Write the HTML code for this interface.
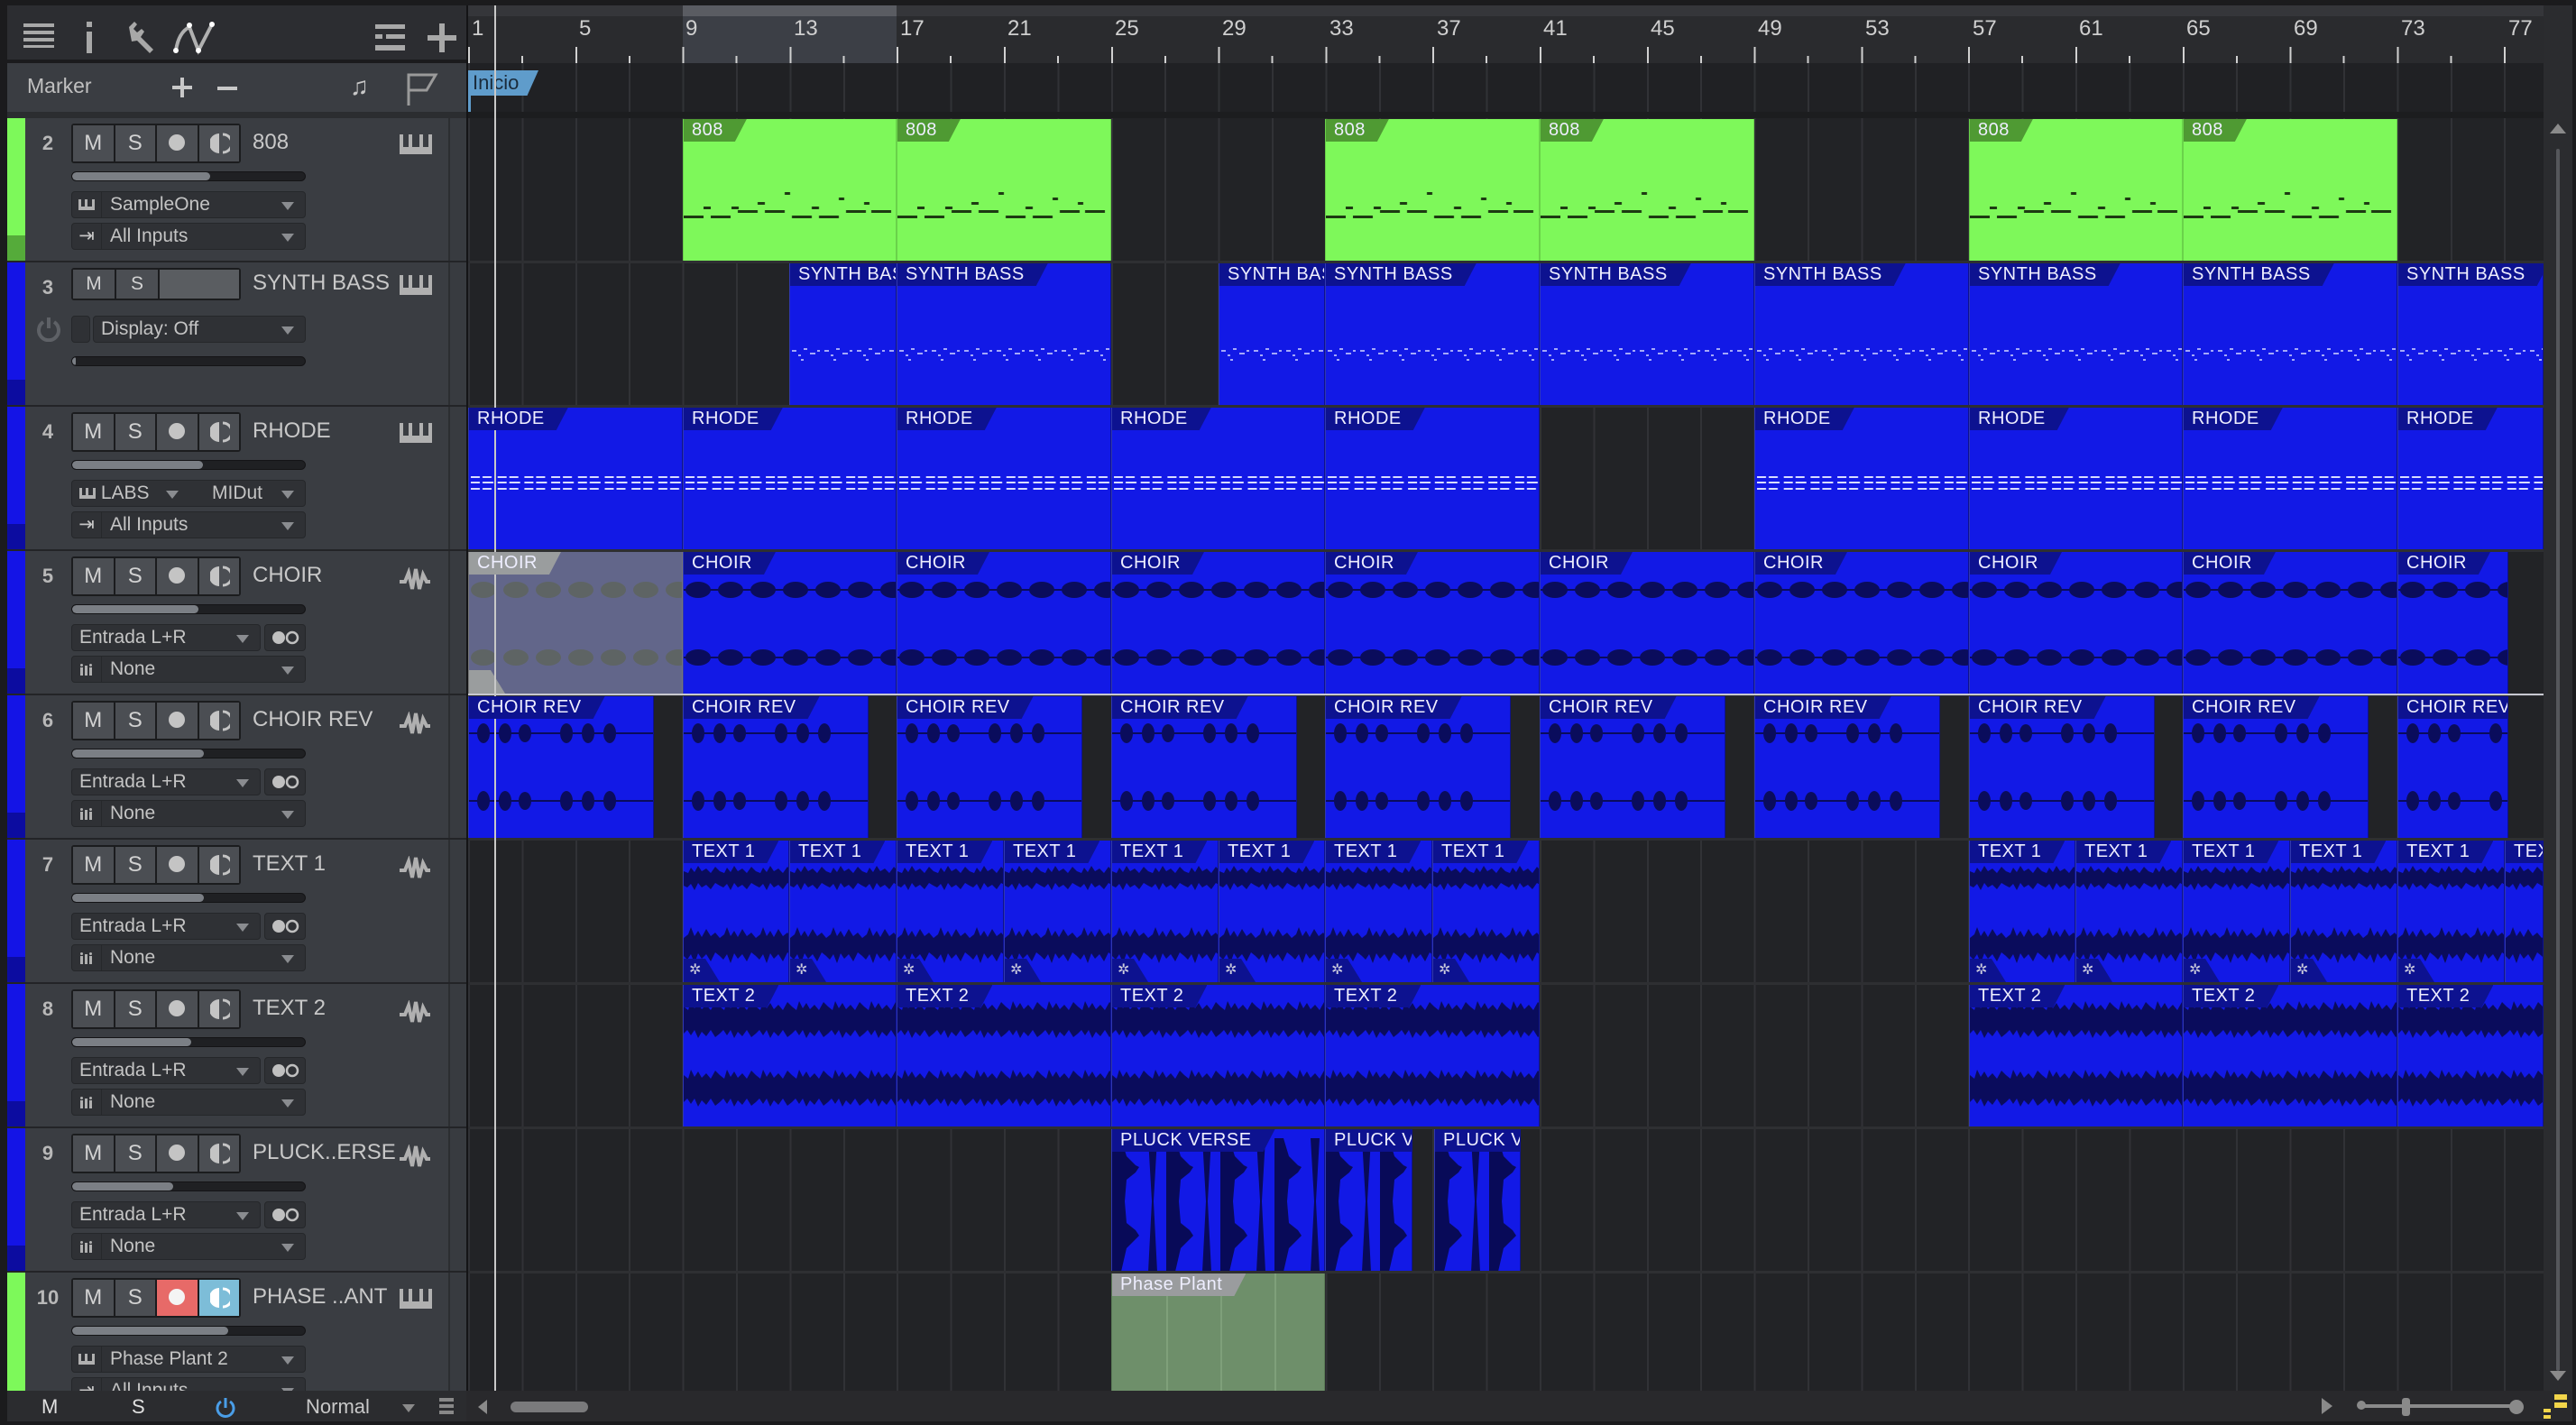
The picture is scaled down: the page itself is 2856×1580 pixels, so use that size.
<!DOCTYPE html>
<html><head><meta charset="utf-8">
<style>
*{box-sizing:border-box;margin:0;padding:0}
body{width:2856px;height:1580px;background:#1b1b1d;position:relative;overflow:hidden;font-family:"Liberation Sans",sans-serif}
.a{position:absolute}
.tl{position:absolute;left:519px;top:124px;width:2301px;height:1418px;background:#222326;
 background-image:repeating-linear-gradient(90deg,#313236 0 2px,transparent 2px 59.4px)}
.hs{position:absolute;left:519px;width:2301px;height:3px;background:#2e2f32}
.clip{position:absolute;background:#1219e6;overflow:hidden;border-left:1px solid #3038b0;border-right:1px solid #0d1190}
.clip svg{position:absolute;left:0;top:0}
.lab{position:absolute;left:0;top:0;height:25px;padding:0 26px 0 9px;background:#0d1290;color:#eef;font-size:20px;line-height:25px;letter-spacing:.5px;white-space:nowrap;clip-path:polygon(0 0,100% 0,calc(100% - 13px) 100%,0 100%);z-index:2}
.g .lab{background:#4f9a33}
.hd{position:absolute;left:28px;width:469px;height:158px;background:#3a3d42}
.num{position:absolute;left:12px;top:15px;width:26px;text-align:center;color:#b8b8b8;font-weight:bold;font-size:22px}
.bt{position:absolute;left:51px;top:6px;width:188px;height:44px;background:#1b1c1e;border-radius:3px;padding:2px;display:flex;gap:2px}
.bt div{flex:1;background:#4b4e53;color:#d2d2d2;font-size:24px;text-align:center;line-height:40px;position:relative}
.bt svg{position:absolute;left:12px;top:7px}
.dot{display:inline-block;width:18px;height:18px;border-radius:50%;background:#c4c4c4;vertical-align:middle;margin-top:-4px}
.nm{position:absolute;left:252px;top:13px;color:#c8c8c8;font-size:24px;white-space:nowrap}
.sl{position:absolute;left:51px;top:59px;width:260px;height:11px;background:#1f2023;border:1px solid #141416;border-radius:6px;overflow:hidden}
.sl i{display:block;height:100%;background:#7b7f85;border-radius:5px}
.dd{position:absolute;height:30px;background:#2f3135;border:1px solid #25272a;border-radius:4px;color:#c4c4c4;font-size:21px;line-height:28px;white-space:nowrap}
.dd .ic{position:absolute;left:0;top:0;width:33px;height:100%;border-right:1px solid #26282b;display:flex;align-items:center;justify-content:center}
.dd .tx{position:absolute;left:42px;top:0}
.dd .ar{position:absolute;right:12px;top:11px;width:0;height:0;border-left:7px solid transparent;border-right:7px solid transparent;border-top:9px solid #8a8c90}
.strip{position:absolute;left:8px;width:20px;height:158px}
.strip i{position:absolute;left:0;bottom:0;width:20px;height:28px}
.ico{position:absolute;left:415px;top:18px}
.rn{position:absolute;top:18px;color:#cfcfcf;font-size:24px}
</style></head><body>
<svg class="a" width="0" height="0" style="left:0;top:0">
<defs>
<symbol id="mon" viewBox="0 0 22 26"><path d="M10 2 A11 11 0 0 0 10 24Z" fill="currentColor"/><path d="M14 3 A10 10 0 0 1 14 23" fill="none" stroke="currentColor" stroke-width="3"/></symbol>
<pattern id="p808" patternUnits="userSpaceOnUse" width="237.6" height="158">
<g fill="#1d3a12"><rect x="0" y="107" width="22" height="3"/><rect x="30" y="107" width="22" height="3"/><rect x="60" y="101" width="22" height="3"/><rect x="90" y="101" width="22" height="3"/><rect x="120" y="107" width="22" height="3"/><rect x="150" y="107" width="22" height="3"/><rect x="180" y="101" width="22" height="3"/><rect x="208" y="101" width="22" height="3"/><rect x="22" y="97" width="8" height="3"/><rect x="53" y="97" width="8" height="3"/><rect x="82" y="92" width="8" height="3"/><rect x="112" y="81" width="6" height="3"/><rect x="142" y="97" width="8" height="3"/><rect x="172" y="87" width="6" height="3"/><rect x="200" y="92" width="6" height="3"/></g>
</pattern>
<pattern id="psyn" patternUnits="userSpaceOnUse" width="36" height="158">
<g fill="#c8ccff" opacity=".8"><rect x="2" y="96" width="5" height="2"/><rect x="9" y="101" width="3" height="2"/><rect x="15" y="94" width="4" height="2"/><rect x="22" y="99" width="6" height="2"/><rect x="30" y="96" width="3" height="2"/><rect x="12" y="106" width="3" height="2"/></g>
</pattern>
<pattern id="prh" patternUnits="userSpaceOnUse" width="29.7" height="158">
<g fill="#d8dcff"><rect x="2" y="76" width="10" height="2"/><rect x="15" y="76" width="10" height="2"/><rect x="2" y="82" width="10" height="2"/><rect x="15" y="82" width="12" height="2"/><rect x="2" y="89" width="10" height="2"/><rect x="15" y="89" width="10" height="2"/></g>
</pattern>
<pattern id="pch" patternUnits="userSpaceOnUse" width="36" height="158">
<g fill="#0a0c5c"><ellipse cx="16" cy="42" rx="14" ry="9"/><ellipse cx="16" cy="117" rx="14" ry="9"/><rect x="0" y="41" width="36" height="2"/><rect x="0" y="116" width="36" height="2"/></g>
</pattern>
<pattern id="pchg" patternUnits="userSpaceOnUse" width="36" height="158">
<g fill="#5e6464"><ellipse cx="16" cy="42" rx="14" ry="9"/><ellipse cx="16" cy="117" rx="14" ry="9"/></g>
</pattern>
<pattern id="prev" patternUnits="userSpaceOnUse" width="206" height="158">
<g fill="#0a0c5c"><rect x="0" y="40" width="206" height="2"/><rect x="0" y="115" width="206" height="2"/>
<ellipse cx="16" cy="41" rx="7" ry="11"/><ellipse cx="40" cy="41" rx="7" ry="11"/><ellipse cx="62" cy="41" rx="7" ry="10"/><ellipse cx="108" cy="41" rx="7" ry="11"/><ellipse cx="132" cy="41" rx="7" ry="11"/><ellipse cx="156" cy="41" rx="7" ry="11"/>
<ellipse cx="16" cy="116" rx="7" ry="11"/><ellipse cx="40" cy="116" rx="7" ry="11"/><ellipse cx="62" cy="116" rx="7" ry="10"/><ellipse cx="108" cy="116" rx="7" ry="11"/><ellipse cx="132" cy="116" rx="7" ry="11"/><ellipse cx="156" cy="116" rx="7" ry="11"/></g>
</pattern>
<pattern id="ptx" patternUnits="userSpaceOnUse" width="40" height="158">
<g fill="#0a0c5c"><polygon points="0,34 5,36 8,30 12,35 16,28 20,34 25,31 30,36 35,29 40,34 40,50 35,47 30,54 25,49 20,52 16,47 12,55 8,48 4,52 0,50"/>
<polygon points="0,108 5,104 8,96 12,106 16,100 20,107 25,98 30,106 35,102 40,108 40,128 35,124 30,134 25,126 20,131 16,125 12,136 8,126 4,132 0,128"/></g>
</pattern>
<pattern id="ptx2" patternUnits="userSpaceOnUse" width="40" height="158">
<g fill="#0a0c5c"><polygon points="0,24 5,28 8,18 12,26 16,20 20,27 25,22 30,28 35,19 40,24 40,54 35,58 30,50 25,57 20,52 16,59 12,50 8,56 4,50 0,54"/>
<polygon points="0,100 5,104 8,94 12,102 16,96 20,103 25,98 30,104 35,95 40,100 40,130 35,134 30,126 25,133 20,128 16,135 12,126 8,132 4,126 0,130"/></g>
</pattern>
<pattern id="ppl" patternUnits="userSpaceOnUse" width="60" height="158">
<g fill="#080a58"><polygon points="0,10 10,10 16,30 26,40 30,42 26,48 16,56 14,80 16,104 26,112 30,118 26,122 16,132 10,158 0,158"/><polygon points="40,10 50,10 46,80 50,158 40,158 44,80"/></g>
</pattern>
</defs></svg>

<!-- top toolbar -->
<div class="a" style="left:8px;top:6px;width:509px;height:60px;background:#2c2d31"></div>
<svg class="a" style="left:26px;top:26px" width="34" height="28"><g fill="#a8a8a8"><rect y="0" width="34" height="4"/><rect y="8" width="34" height="4"/><rect y="16" width="34" height="4"/><rect y="24" width="34" height="3"/></g></svg>
<svg class="a" style="left:94px;top:24px" width="10" height="36"><g fill="#a8a8a8"><rect x="2" y="0" width="6" height="6"/><rect x="2" y="11" width="6" height="24"/></g></svg>
<svg class="a" style="left:140px;top:24px" width="32" height="36"><path d="M3 6 L9 0 L12 3 L8 8 L12 12 L17 8 L20 11 L16 17 L30 31 L26 35 L12 21 L6 22 Z" fill="#a8a8a8"/></svg>
<svg class="a" style="left:190px;top:22px" width="50" height="40"><path d="M5 34 Q8 14 20 8 L30 34 L45 5" fill="none" stroke="#b0b0b0" stroke-width="4"/><g fill="#fff"><circle cx="5" cy="34" r="3"/><circle cx="20" cy="6" r="3"/><circle cx="30" cy="34" r="3"/><circle cx="45" cy="5" r="3"/></g></svg>
<svg class="a" style="left:416px;top:27px" width="33" height="31"><g fill="#a8a8a8"><rect width="33" height="5"/><rect x="12" y="11" width="21" height="5"/><rect y="11" width="8" height="5"/><rect y="23" width="33" height="6"/></g></svg>
<svg class="a" style="left:474px;top:26px" width="32" height="32"><g fill="#a8a8a8"><rect x="13" width="6" height="32"/><rect y="13" width="32" height="6"/></g></svg>

<!-- marker row -->
<div class="a" style="left:8px;top:70px;width:509px;height:54px;background:#3a3d42"></div>
<div class="a" style="left:30px;top:82px;color:#c0c0c0;font-size:23px">Marker</div>
<svg class="a" style="left:191px;top:86px" width="22" height="22"><g fill="#c8c8c8"><rect x="9" width="4" height="22"/><rect y="9" width="22" height="4"/></g></svg>
<svg class="a" style="left:241px;top:96px" width="22" height="4"><rect width="22" height="4" fill="#c8c8c8"/></svg>
<div class="a" style="left:388px;top:80px;color:#c8c8c8;font-size:28px">♫</div>
<svg class="a" style="left:450px;top:80px" width="36" height="38"><path d="M3 37 V3 H33 L23 20 H3" fill="none" stroke="#9a9a9a" stroke-width="3"/></svg>

<!-- ruler -->
<div class="a" style="left:519px;top:6px;width:2301px;height:64px;background:#2a2b2e"></div>
<div class="a" style="left:519px;top:6px;width:2301px;height:12px;background:#35363a"></div>
<div class="a" style="left:757px;top:6px;width:237px;height:64px;background:#3c3f46"></div>
<div class="a" style="left:757px;top:6px;width:237px;height:12px;background:#5a5c62"></div>
<div class="a" style="left:519px;top:52px;width:2301px;height:18px;background-image:repeating-linear-gradient(90deg,#d0d0d0 0 2px,transparent 2px 118.8px)"></div>
<div class="a" style="left:578px;top:62px;width:2240px;height:8px;background-image:repeating-linear-gradient(90deg,#d0d0d0 0 2px,transparent 2px 118.8px)"></div>
<div class="rn" style="left:523px">1</div><div class="rn" style="left:642px">5</div><div class="rn" style="left:760px">9</div><div class="rn" style="left:880px">13</div><div class="rn" style="left:998px">17</div><div class="rn" style="left:1117px">21</div><div class="rn" style="left:1236px">25</div><div class="rn" style="left:1355px">29</div><div class="rn" style="left:1474px">33</div><div class="rn" style="left:1593px">37</div><div class="rn" style="left:1711px">41</div><div class="rn" style="left:1830px">45</div><div class="rn" style="left:1949px">49</div><div class="rn" style="left:2068px">53</div><div class="rn" style="left:2187px">57</div><div class="rn" style="left:2305px">61</div><div class="rn" style="left:2424px">65</div><div class="rn" style="left:2543px">69</div><div class="rn" style="left:2662px">73</div><div class="rn" style="left:2781px">77</div>

<!-- marker lane & timeline -->
<div class="a" style="left:519px;top:70px;width:2301px;height:54px;background:#202124;background-image:repeating-linear-gradient(90deg,#313236 0 2px,transparent 2px 59.4px)"></div>
<div class="a" style="left:519px;top:78px;width:78px;height:28px;background:#5f9ccb;clip-path:polygon(0 0,100% 0,84% 100%,0 100%);color:#1a2a3a;font-size:22px;line-height:28px;padding-left:5px">Inicio</div>
<div class="a" style="left:519px;top:106px;width:3px;height:18px;background:#5f9ccb"></div>
<div class="a" style="left:519px;top:124px;width:2301px;height:7px;background:#1c1d1f"></div>
<div class="tl" style="top:131px;height:1411px"></div>
<div class="hs" style="top:289px"></div><div class="hs" style="top:449px"></div><div class="hs" style="top:609px"></div><div class="hs" style="top:769px"></div><div class="hs" style="top:929px"></div><div class="hs" style="top:1089px"></div><div class="hs" style="top:1249px"></div><div class="hs" style="top:1409px"></div>

<!-- header column background -->
<div class="a" style="left:8px;top:124px;width:509px;height:1418px;background:#2b2d30"></div>
<div class="a" style="left:497px;top:131px;width:20px;height:1411px;background:#383b40;border-left:2px solid #2c2e31"></div>

<!-- TRACK 2 -->
<div class="strip" style="top:131px;background:#7df95a"><i style="background:#55ab3a"></i></div>
<div class="hd" style="top:131px">
<div class="num">2</div>
<div class="bt"><div>M</div><div>S</div><div><span class="dot"></span></div><div style="color:#c4c4c4"><svg width="22" height="26"><use href="#mon"/></svg></div></div>
<div class="nm">808</div>
<svg class="ico" width="36" height="22"><path d="M0 0 H4 V14 H10 V0 H14 V14 H22 V0 H26 V14 H32 V0 H36 V22 H0Z" fill="#b0b0b0"/></svg>
<div class="sl"><i style="width:153px"></i></div>
<div class="dd" style="left:51px;top:81px;width:260px"><div class="ic"><svg width="18" height="12"><path d="M0 0H3V8H7V0H10V8H15V0H18V12H0Z" fill="#b0b0b0"/></svg></div><div class="tx">SampleOne</div><div class="ar"></div></div>
<div class="dd" style="left:51px;top:116px;width:260px"><div class="ic">⇥</div><div class="tx">All Inputs</div><div class="ar"></div></div>
</div>

<!-- TRACK 3 -->
<div class="strip" style="top:291px;background:#1414e6"><i style="background:#0c0ca0"></i></div>
<div class="hd" style="top:291px">
<div class="num">3</div>
<div class="bt" style="height:36px"><div style="flex:0 0 46px;line-height:32px;font-size:21px">M</div><div style="flex:0 0 46px;line-height:32px;font-size:21px">S</div><div style="background:#5a5d61"></div></div>
<div class="nm" style="top:9px">SYNTH BASS</div>
<svg class="ico" style="top:14px" width="36" height="22"><path d="M0 0 H4 V14 H10 V0 H14 V14 H22 V0 H26 V14 H32 V0 H36 V22 H0Z" fill="#b0b0b0"/></svg>
<svg class="a" style="left:12px;top:60px" width="28" height="28"><path d="M8 6 A11 11 0 1 0 20 6" fill="none" stroke="#5e6166" stroke-width="4"/><rect x="12" y="1" width="4" height="12" fill="#5e6166"/></svg>
<div class="dd" style="left:51px;top:59px;width:21px"></div>
<div class="dd" style="left:75px;top:59px;width:236px"><div class="tx" style="left:8px">Display: Off</div><div class="ar"></div></div>
<div class="sl" style="top:104px"><i style="width:4px"></i></div>
</div>

<!-- TRACK 4 -->
<div class="strip" style="top:451px;background:#1414e6"><i style="background:#0c0ca0"></i></div>
<div class="hd" style="top:451px">
<div class="num">4</div>
<div class="bt"><div>M</div><div>S</div><div><span class="dot"></span></div><div style="color:#c4c4c4"><svg width="22" height="26"><use href="#mon"/></svg></div></div>
<div class="nm">RHODE</div>
<svg class="ico" width="36" height="22"><path d="M0 0 H4 V14 H10 V0 H14 V14 H22 V0 H26 V14 H32 V0 H36 V22 H0Z" fill="#b0b0b0"/></svg>
<div class="sl"><i style="width:145px"></i></div>
<div class="dd" style="left:51px;top:81px;width:260px"><div class="tx" style="left:8px"><svg width="18" height="12"><path d="M0 0H3V8H7V0H10V8H15V0H18V12H0Z" fill="#b0b0b0"/></svg> LABS</div><div class="ar" style="right:140px"></div><div class="tx" style="left:155px">MIDut</div><div class="ar"></div></div>
<div class="dd" style="left:51px;top:116px;width:260px"><div class="ic">⇥</div><div class="tx">All Inputs</div><div class="ar"></div></div>
</div>

<!-- audio tracks 5-9 -->
<div class="strip" style="top:611px;background:#1414e6"><i style="background:#0c0ca0"></i></div>
<div class="hd" style="top:611px">
<div class="num">5</div>
<div class="bt"><div>M</div><div>S</div><div><span class="dot"></span></div><div style="color:#c4c4c4"><svg width="22" height="26"><use href="#mon"/></svg></div></div>
<div class="nm">CHOIR</div>
<svg class="ico" width="34" height="26"><path d="M0 16 L6 16 L10 6 L14 24 L18 2 L22 24 L26 8 L30 16 L34 16" fill="none" stroke="#b0b0b0" stroke-width="4"/></svg>
<div class="sl"><i style="width:140px"></i></div>
<div class="dd" style="left:51px;top:81px;width:210px"><div class="tx" style="left:8px">Entrada L+R</div><div class="ar"></div></div>
<div class="dd" style="left:265px;top:81px;width:46px"><svg style="position:absolute;left:7px;top:6px" width="32" height="16"><circle cx="8" cy="8" r="7" fill="#c0c0c0"/><circle cx="23" cy="8" r="6" fill="none" stroke="#c0c0c0" stroke-width="2.5"/></svg></div>
<div class="dd" style="left:51px;top:116px;width:260px"><div class="ic"><svg width="16" height="14"><g fill="#b0b0b0"><rect x="1" y="5" width="3" height="9"/><rect x="6" y="3" width="3" height="11"/><rect x="11" y="5" width="3" height="9"/><circle cx="2.5" cy="2.5" r="1.5"/><circle cx="12.5" cy="2.5" r="1.5"/></g></svg></div><div class="tx">None</div><div class="ar"></div></div>
</div>

<div class="strip" style="top:771px;background:#1414e6"><i style="background:#0c0ca0"></i></div>
<div class="hd" style="top:771px">
<div class="num">6</div>
<div class="bt"><div>M</div><div>S</div><div><span class="dot"></span></div><div style="color:#c4c4c4"><svg width="22" height="26"><use href="#mon"/></svg></div></div>
<div class="nm">CHOIR REV</div>
<svg class="ico" width="34" height="26"><path d="M0 16 L6 16 L10 6 L14 24 L18 2 L22 24 L26 8 L30 16 L34 16" fill="none" stroke="#b0b0b0" stroke-width="4"/></svg>
<div class="sl"><i style="width:146px"></i></div>
<div class="dd" style="left:51px;top:81px;width:210px"><div class="tx" style="left:8px">Entrada L+R</div><div class="ar"></div></div>
<div class="dd" style="left:265px;top:81px;width:46px"><svg style="position:absolute;left:7px;top:6px" width="32" height="16"><circle cx="8" cy="8" r="7" fill="#c0c0c0"/><circle cx="23" cy="8" r="6" fill="none" stroke="#c0c0c0" stroke-width="2.5"/></svg></div>
<div class="dd" style="left:51px;top:116px;width:260px"><div class="ic"><svg width="16" height="14"><g fill="#b0b0b0"><rect x="1" y="5" width="3" height="9"/><rect x="6" y="3" width="3" height="11"/><rect x="11" y="5" width="3" height="9"/><circle cx="2.5" cy="2.5" r="1.5"/><circle cx="12.5" cy="2.5" r="1.5"/></g></svg></div><div class="tx">None</div><div class="ar"></div></div>
</div>

<div class="strip" style="top:931px;background:#1414e6"><i style="background:#0c0ca0"></i></div>
<div class="hd" style="top:931px">
<div class="num">7</div>
<div class="bt"><div>M</div><div>S</div><div><span class="dot"></span></div><div style="color:#c4c4c4"><svg width="22" height="26"><use href="#mon"/></svg></div></div>
<div class="nm">TEXT 1</div>
<svg class="ico" width="34" height="26"><path d="M0 16 L6 16 L10 6 L14 24 L18 2 L22 24 L26 8 L30 16 L34 16" fill="none" stroke="#b0b0b0" stroke-width="4"/></svg>
<div class="sl"><i style="width:146px"></i></div>
<div class="dd" style="left:51px;top:81px;width:210px"><div class="tx" style="left:8px">Entrada L+R</div><div class="ar"></div></div>
<div class="dd" style="left:265px;top:81px;width:46px"><svg style="position:absolute;left:7px;top:6px" width="32" height="16"><circle cx="8" cy="8" r="7" fill="#c0c0c0"/><circle cx="23" cy="8" r="6" fill="none" stroke="#c0c0c0" stroke-width="2.5"/></svg></div>
<div class="dd" style="left:51px;top:116px;width:260px"><div class="ic"><svg width="16" height="14"><g fill="#b0b0b0"><rect x="1" y="5" width="3" height="9"/><rect x="6" y="3" width="3" height="11"/><rect x="11" y="5" width="3" height="9"/><circle cx="2.5" cy="2.5" r="1.5"/><circle cx="12.5" cy="2.5" r="1.5"/></g></svg></div><div class="tx">None</div><div class="ar"></div></div>
</div>

<div class="strip" style="top:1091px;background:#1414e6"><i style="background:#0c0ca0"></i></div>
<div class="hd" style="top:1091px">
<div class="num">8</div>
<div class="bt"><div>M</div><div>S</div><div><span class="dot"></span></div><div style="color:#c4c4c4"><svg width="22" height="26"><use href="#mon"/></svg></div></div>
<div class="nm">TEXT 2</div>
<svg class="ico" width="34" height="26"><path d="M0 16 L6 16 L10 6 L14 24 L18 2 L22 24 L26 8 L30 16 L34 16" fill="none" stroke="#b0b0b0" stroke-width="4"/></svg>
<div class="sl"><i style="width:132px"></i></div>
<div class="dd" style="left:51px;top:81px;width:210px"><div class="tx" style="left:8px">Entrada L+R</div><div class="ar"></div></div>
<div class="dd" style="left:265px;top:81px;width:46px"><svg style="position:absolute;left:7px;top:6px" width="32" height="16"><circle cx="8" cy="8" r="7" fill="#c0c0c0"/><circle cx="23" cy="8" r="6" fill="none" stroke="#c0c0c0" stroke-width="2.5"/></svg></div>
<div class="dd" style="left:51px;top:116px;width:260px"><div class="ic"><svg width="16" height="14"><g fill="#b0b0b0"><rect x="1" y="5" width="3" height="9"/><rect x="6" y="3" width="3" height="11"/><rect x="11" y="5" width="3" height="9"/><circle cx="2.5" cy="2.5" r="1.5"/><circle cx="12.5" cy="2.5" r="1.5"/></g></svg></div><div class="tx">None</div><div class="ar"></div></div>
</div>

<div class="strip" style="top:1251px;background:#1414e6"><i style="background:#0c0ca0"></i></div>
<div class="hd" style="top:1251px">
<div class="num">9</div>
<div class="bt"><div>M</div><div>S</div><div><span class="dot"></span></div><div style="color:#c4c4c4"><svg width="22" height="26"><use href="#mon"/></svg></div></div>
<div class="nm">PLUCK..ERSE</div>
<svg class="ico" width="34" height="26"><path d="M0 16 L6 16 L10 6 L14 24 L18 2 L22 24 L26 8 L30 16 L34 16" fill="none" stroke="#b0b0b0" stroke-width="4"/></svg>
<div class="sl"><i style="width:112px"></i></div>
<div class="dd" style="left:51px;top:81px;width:210px"><div class="tx" style="left:8px">Entrada L+R</div><div class="ar"></div></div>
<div class="dd" style="left:265px;top:81px;width:46px"><svg style="position:absolute;left:7px;top:6px" width="32" height="16"><circle cx="8" cy="8" r="7" fill="#c0c0c0"/><circle cx="23" cy="8" r="6" fill="none" stroke="#c0c0c0" stroke-width="2.5"/></svg></div>
<div class="dd" style="left:51px;top:116px;width:260px"><div class="ic"><svg width="16" height="14"><g fill="#b0b0b0"><rect x="1" y="5" width="3" height="9"/><rect x="6" y="3" width="3" height="11"/><rect x="11" y="5" width="3" height="9"/><circle cx="2.5" cy="2.5" r="1.5"/><circle cx="12.5" cy="2.5" r="1.5"/></g></svg></div><div class="tx">None</div><div class="ar"></div></div>
</div>

<!-- TRACK 10 -->
<div class="strip" style="top:1411px;height:131px;background:#7df95a"></div>
<div class="hd" style="top:1411px;height:131px;overflow:hidden">
<div class="num">10</div>
<div class="bt"><div>M</div><div>S</div><div style="background:#e76a68"><span class="dot" style="background:#f4f4f4"></span></div><div style="background:#7dbdd8;color:#fff"><svg width="22" height="26"><use href="#mon"/></svg></div></div>
<div class="nm">PHASE ..ANT</div>
<svg class="ico" width="36" height="22"><path d="M0 0 H4 V14 H10 V0 H14 V14 H22 V0 H26 V14 H32 V0 H36 V22 H0Z" fill="#b0b0b0"/></svg>
<div class="sl"><i style="width:173px"></i></div>
<div class="dd" style="left:51px;top:81px;width:260px"><div class="ic"><svg width="18" height="12"><path d="M0 0H3V8H7V0H10V8H15V0H18V12H0Z" fill="#b0b0b0"/></svg></div><div class="tx">Phase Plant 2</div><div class="ar"></div></div>
<div class="dd" style="left:51px;top:116px;width:260px"><div class="ic">⇥</div><div class="tx">All Inputs</div><div class="ar"></div></div>
</div>
<div class="a" style="left:8px;top:289px;width:509px;height:2px;background:#232427"></div>
<div class="a" style="left:8px;top:449px;width:509px;height:2px;background:#232427"></div>
<div class="a" style="left:8px;top:609px;width:509px;height:2px;background:#232427"></div>
<div class="a" style="left:8px;top:769px;width:509px;height:2px;background:#232427"></div>
<div class="a" style="left:8px;top:929px;width:509px;height:2px;background:#232427"></div>
<div class="a" style="left:8px;top:1089px;width:509px;height:2px;background:#232427"></div>
<div class="a" style="left:8px;top:1249px;width:509px;height:2px;background:#232427"></div>
<div class="a" style="left:8px;top:1409px;width:509px;height:2px;background:#232427"></div>
<div class="a" style="left:517px;top:6px;width:2px;height:1536px;background:#141416"></div>

<!-- CLIPS track 2 (808) -->
<div class="clip g" style="left:757px;top:132px;width:237px;height:157px;background:#7ef85a;border-color:#6ad24a"><div class="lab">808</div><svg width="237" height="157"><rect width="237" height="157" fill="url(#p808)"/></svg></div>
<div class="clip g" style="left:994px;top:132px;width:238px;height:157px;background:#7ef85a;border-color:#6ad24a"><div class="lab">808</div><svg width="238" height="157"><rect width="238" height="157" fill="url(#p808)"/></svg></div>
<div class="clip g" style="left:1469px;top:132px;width:238px;height:157px;background:#7ef85a;border-color:#6ad24a"><div class="lab">808</div><svg width="238" height="157"><rect width="238" height="157" fill="url(#p808)"/></svg></div>
<div class="clip g" style="left:1707px;top:132px;width:238px;height:157px;background:#7ef85a;border-color:#6ad24a"><div class="lab">808</div><svg width="238" height="157"><rect width="238" height="157" fill="url(#p808)"/></svg></div>
<div class="clip g" style="left:2183px;top:132px;width:237px;height:157px;background:#7ef85a;border-color:#6ad24a"><div class="lab">808</div><svg width="237" height="157"><rect width="237" height="157" fill="url(#p808)"/></svg></div>
<div class="clip g" style="left:2420px;top:132px;width:238px;height:157px;background:#7ef85a;border-color:#6ad24a"><div class="lab">808</div><svg width="238" height="157"><rect width="238" height="157" fill="url(#p808)"/></svg></div>

<!-- track 3 SYNTH BASS -->
<div class="clip" style="left:875px;top:292px;width:119px;height:157px"><div class="lab">SYNTH BASS</div><svg width="119" height="157"><rect width="119" height="157" fill="url(#psyn)"/></svg></div>
<div class="clip" style="left:994px;top:292px;width:238px;height:157px"><div class="lab">SYNTH BASS</div><svg width="238" height="157"><rect width="238" height="157" fill="url(#psyn)"/></svg></div>
<div class="clip" style="left:1351px;top:292px;width:118px;height:157px"><div class="lab">SYNTH BASS</div><svg width="118" height="157"><rect width="118" height="157" fill="url(#psyn)"/></svg></div>
<div class="clip" style="left:1469px;top:292px;width:238px;height:157px"><div class="lab">SYNTH BASS</div><svg width="238" height="157"><rect width="238" height="157" fill="url(#psyn)"/></svg></div>
<div class="clip" style="left:1707px;top:292px;width:238px;height:157px"><div class="lab">SYNTH BASS</div><svg width="238" height="157"><rect width="238" height="157" fill="url(#psyn)"/></svg></div>
<div class="clip" style="left:1945px;top:292px;width:238px;height:157px"><div class="lab">SYNTH BASS</div><svg width="238" height="157"><rect width="238" height="157" fill="url(#psyn)"/></svg></div>
<div class="clip" style="left:2183px;top:292px;width:237px;height:157px"><div class="lab">SYNTH BASS</div><svg width="237" height="157"><rect width="237" height="157" fill="url(#psyn)"/></svg></div>
<div class="clip" style="left:2420px;top:292px;width:238px;height:157px"><div class="lab">SYNTH BASS</div><svg width="238" height="157"><rect width="238" height="157" fill="url(#psyn)"/></svg></div>
<div class="clip" style="left:2658px;top:292px;width:162px;height:157px"><div class="lab">SYNTH BASS</div><svg width="162" height="157"><rect width="162" height="157" fill="url(#psyn)"/></svg></div>

<!-- track 4 RHODE -->
<div class="clip" style="left:519px;top:452px;width:238px;height:157px"><div class="lab">RHODE</div><svg width="238" height="157"><rect width="238" height="157" fill="url(#prh)"/></svg></div>
<div class="clip" style="left:757px;top:452px;width:237px;height:157px"><div class="lab">RHODE</div><svg width="237" height="157"><rect width="237" height="157" fill="url(#prh)"/></svg></div>
<div class="clip" style="left:994px;top:452px;width:238px;height:157px"><div class="lab">RHODE</div><svg width="238" height="157"><rect width="238" height="157" fill="url(#prh)"/></svg></div>
<div class="clip" style="left:1232px;top:452px;width:237px;height:157px"><div class="lab">RHODE</div><svg width="237" height="157"><rect width="237" height="157" fill="url(#prh)"/></svg></div>
<div class="clip" style="left:1469px;top:452px;width:238px;height:157px"><div class="lab">RHODE</div><svg width="238" height="157"><rect width="238" height="157" fill="url(#prh)"/></svg></div>
<div class="clip" style="left:1945px;top:452px;width:238px;height:157px"><div class="lab">RHODE</div><svg width="238" height="157"><rect width="238" height="157" fill="url(#prh)"/></svg></div>
<div class="clip" style="left:2183px;top:452px;width:237px;height:157px"><div class="lab">RHODE</div><svg width="237" height="157"><rect width="237" height="157" fill="url(#prh)"/></svg></div>
<div class="clip" style="left:2420px;top:452px;width:238px;height:157px"><div class="lab">RHODE</div><svg width="238" height="157"><rect width="238" height="157" fill="url(#prh)"/></svg></div>
<div class="clip" style="left:2658px;top:452px;width:162px;height:157px"><div class="lab">RHODE</div><svg width="162" height="157"><rect width="162" height="157" fill="url(#prh)"/></svg></div>

<!-- track 5 CHOIR -->
<div class="clip" style="left:519px;top:612px;width:238px;height:157px;background:#62668a;border-color:#777"><div class="lab" style="background:#9a9d9e">CHOIR</div><svg width="238" height="157"><rect width="238" height="157" fill="url(#pchg)"/></svg><div class="a" style="left:0;bottom:0;width:40px;height:26px;background:#9a9d9e;clip-path:polygon(0 0,60% 0,100% 100%,0 100%)"></div></div>
<div class="clip" style="left:757px;top:612px;width:237px;height:157px"><div class="lab">CHOIR</div><svg width="237" height="157"><rect width="237" height="157" fill="url(#pch)"/></svg></div>
<div class="clip" style="left:994px;top:612px;width:238px;height:157px"><div class="lab">CHOIR</div><svg width="238" height="157"><rect width="238" height="157" fill="url(#pch)"/></svg></div>
<div class="clip" style="left:1232px;top:612px;width:237px;height:157px"><div class="lab">CHOIR</div><svg width="237" height="157"><rect width="237" height="157" fill="url(#pch)"/></svg></div>
<div class="clip" style="left:1469px;top:612px;width:238px;height:157px"><div class="lab">CHOIR</div><svg width="238" height="157"><rect width="238" height="157" fill="url(#pch)"/></svg></div>
<div class="clip" style="left:1707px;top:612px;width:238px;height:157px"><div class="lab">CHOIR</div><svg width="238" height="157"><rect width="238" height="157" fill="url(#pch)"/></svg></div>
<div class="clip" style="left:1945px;top:612px;width:238px;height:157px"><div class="lab">CHOIR</div><svg width="238" height="157"><rect width="238" height="157" fill="url(#pch)"/></svg></div>
<div class="clip" style="left:2183px;top:612px;width:237px;height:157px"><div class="lab">CHOIR</div><svg width="237" height="157"><rect width="237" height="157" fill="url(#pch)"/></svg></div>
<div class="clip" style="left:2420px;top:612px;width:238px;height:157px"><div class="lab">CHOIR</div><svg width="238" height="157"><rect width="238" height="157" fill="url(#pch)"/></svg></div>
<div class="clip" style="left:2658px;top:612px;width:123px;height:157px"><div class="lab">CHOIR</div><svg width="123" height="157"><rect width="123" height="157" fill="url(#pch)"/></svg></div>
<div class="a" style="left:519px;top:769px;width:2301px;height:2px;background:#c8c8d0"></div>

<!-- track 6 CHOIR REV -->
<div class="clip" style="left:519px;top:772px;width:206px;height:157px"><div class="lab">CHOIR REV</div><svg width="206" height="157"><rect width="206" height="157" fill="url(#prev)"/></svg></div>
<div class="clip" style="left:757px;top:772px;width:206px;height:157px"><div class="lab">CHOIR REV</div><svg width="206" height="157"><rect width="206" height="157" fill="url(#prev)"/></svg></div>
<div class="clip" style="left:994px;top:772px;width:206px;height:157px"><div class="lab">CHOIR REV</div><svg width="206" height="157"><rect width="206" height="157" fill="url(#prev)"/></svg></div>
<div class="clip" style="left:1232px;top:772px;width:206px;height:157px"><div class="lab">CHOIR REV</div><svg width="206" height="157"><rect width="206" height="157" fill="url(#prev)"/></svg></div>
<div class="clip" style="left:1469px;top:772px;width:206px;height:157px"><div class="lab">CHOIR REV</div><svg width="206" height="157"><rect width="206" height="157" fill="url(#prev)"/></svg></div>
<div class="clip" style="left:1707px;top:772px;width:206px;height:157px"><div class="lab">CHOIR REV</div><svg width="206" height="157"><rect width="206" height="157" fill="url(#prev)"/></svg></div>
<div class="clip" style="left:1945px;top:772px;width:206px;height:157px"><div class="lab">CHOIR REV</div><svg width="206" height="157"><rect width="206" height="157" fill="url(#prev)"/></svg></div>
<div class="clip" style="left:2183px;top:772px;width:206px;height:157px"><div class="lab">CHOIR REV</div><svg width="206" height="157"><rect width="206" height="157" fill="url(#prev)"/></svg></div>
<div class="clip" style="left:2420px;top:772px;width:206px;height:157px"><div class="lab">CHOIR REV</div><svg width="206" height="157"><rect width="206" height="157" fill="url(#prev)"/></svg></div>
<div class="clip" style="left:2658px;top:772px;width:123px;height:157px"><div class="lab">CHOIR REV</div><svg width="123" height="157"><rect width="123" height="157" fill="url(#prev)"/></svg></div>

<!-- track 7 TEXT 1 -->
<div class="clip" style="left:757px;top:932px;width:118px;height:157px"><div class="lab">TEXT 1</div><svg width="118" height="157"><rect width="118" height="157" fill="url(#ptx)"/></svg><div class="a" style="left:0;bottom:0;width:40px;height:26px;background:#0d1290;color:#ccd;font-size:16px;line-height:26px;padding-left:6px;clip-path:polygon(0 0,60% 0,100% 100%,0 100%)">✲</div></div>
<div class="clip" style="left:875px;top:932px;width:119px;height:157px"><div class="lab">TEXT 1</div><svg width="119" height="157"><rect width="119" height="157" fill="url(#ptx)"/></svg><div class="a" style="left:0;bottom:0;width:40px;height:26px;background:#0d1290;color:#ccd;font-size:16px;line-height:26px;padding-left:6px;clip-path:polygon(0 0,60% 0,100% 100%,0 100%)">✲</div></div>
<div class="clip" style="left:994px;top:932px;width:119px;height:157px"><div class="lab">TEXT 1</div><svg width="119" height="157"><rect width="119" height="157" fill="url(#ptx)"/></svg><div class="a" style="left:0;bottom:0;width:40px;height:26px;background:#0d1290;color:#ccd;font-size:16px;line-height:26px;padding-left:6px;clip-path:polygon(0 0,60% 0,100% 100%,0 100%)">✲</div></div>
<div class="clip" style="left:1113px;top:932px;width:119px;height:157px"><div class="lab">TEXT 1</div><svg width="119" height="157"><rect width="119" height="157" fill="url(#ptx)"/></svg><div class="a" style="left:0;bottom:0;width:40px;height:26px;background:#0d1290;color:#ccd;font-size:16px;line-height:26px;padding-left:6px;clip-path:polygon(0 0,60% 0,100% 100%,0 100%)">✲</div></div>
<div class="clip" style="left:1232px;top:932px;width:119px;height:157px"><div class="lab">TEXT 1</div><svg width="119" height="157"><rect width="119" height="157" fill="url(#ptx)"/></svg><div class="a" style="left:0;bottom:0;width:40px;height:26px;background:#0d1290;color:#ccd;font-size:16px;line-height:26px;padding-left:6px;clip-path:polygon(0 0,60% 0,100% 100%,0 100%)">✲</div></div>
<div class="clip" style="left:1351px;top:932px;width:118px;height:157px"><div class="lab">TEXT 1</div><svg width="118" height="157"><rect width="118" height="157" fill="url(#ptx)"/></svg><div class="a" style="left:0;bottom:0;width:40px;height:26px;background:#0d1290;color:#ccd;font-size:16px;line-height:26px;padding-left:6px;clip-path:polygon(0 0,60% 0,100% 100%,0 100%)">✲</div></div>
<div class="clip" style="left:1469px;top:932px;width:119px;height:157px"><div class="lab">TEXT 1</div><svg width="119" height="157"><rect width="119" height="157" fill="url(#ptx)"/></svg><div class="a" style="left:0;bottom:0;width:40px;height:26px;background:#0d1290;color:#ccd;font-size:16px;line-height:26px;padding-left:6px;clip-path:polygon(0 0,60% 0,100% 100%,0 100%)">✲</div></div>
<div class="clip" style="left:1588px;top:932px;width:119px;height:157px"><div class="lab">TEXT 1</div><svg width="119" height="157"><rect width="119" height="157" fill="url(#ptx)"/></svg><div class="a" style="left:0;bottom:0;width:40px;height:26px;background:#0d1290;color:#ccd;font-size:16px;line-height:26px;padding-left:6px;clip-path:polygon(0 0,60% 0,100% 100%,0 100%)">✲</div></div>
<div class="clip" style="left:2183px;top:932px;width:118px;height:157px"><div class="lab">TEXT 1</div><svg width="118" height="157"><rect width="118" height="157" fill="url(#ptx)"/></svg><div class="a" style="left:0;bottom:0;width:40px;height:26px;background:#0d1290;color:#ccd;font-size:16px;line-height:26px;padding-left:6px;clip-path:polygon(0 0,60% 0,100% 100%,0 100%)">✲</div></div>
<div class="clip" style="left:2301px;top:932px;width:119px;height:157px"><div class="lab">TEXT 1</div><svg width="119" height="157"><rect width="119" height="157" fill="url(#ptx)"/></svg><div class="a" style="left:0;bottom:0;width:40px;height:26px;background:#0d1290;color:#ccd;font-size:16px;line-height:26px;padding-left:6px;clip-path:polygon(0 0,60% 0,100% 100%,0 100%)">✲</div></div>
<div class="clip" style="left:2420px;top:932px;width:119px;height:157px"><div class="lab">TEXT 1</div><svg width="119" height="157"><rect width="119" height="157" fill="url(#ptx)"/></svg><div class="a" style="left:0;bottom:0;width:40px;height:26px;background:#0d1290;color:#ccd;font-size:16px;line-height:26px;padding-left:6px;clip-path:polygon(0 0,60% 0,100% 100%,0 100%)">✲</div></div>
<div class="clip" style="left:2539px;top:932px;width:119px;height:157px"><div class="lab">TEXT 1</div><svg width="119" height="157"><rect width="119" height="157" fill="url(#ptx)"/></svg><div class="a" style="left:0;bottom:0;width:40px;height:26px;background:#0d1290;color:#ccd;font-size:16px;line-height:26px;padding-left:6px;clip-path:polygon(0 0,60% 0,100% 100%,0 100%)">✲</div></div>
<div class="clip" style="left:2658px;top:932px;width:119px;height:157px"><div class="lab">TEXT 1</div><svg width="119" height="157"><rect width="119" height="157" fill="url(#ptx)"/></svg><div class="a" style="left:0;bottom:0;width:40px;height:26px;background:#0d1290;color:#ccd;font-size:16px;line-height:26px;padding-left:6px;clip-path:polygon(0 0,60% 0,100% 100%,0 100%)">✲</div></div>
<div class="clip" style="left:2777px;top:932px;width:43px;height:157px"><div class="lab">TEXT 1</div><svg width="43" height="157"><rect width="43" height="157" fill="url(#ptx)"/></svg></div>

<!-- track 8 TEXT 2 -->
<div class="clip" style="left:757px;top:1092px;width:237px;height:157px"><div class="lab">TEXT 2</div><svg width="237" height="157"><rect width="237" height="157" fill="url(#ptx2)"/></svg></div>
<div class="clip" style="left:994px;top:1092px;width:238px;height:157px"><div class="lab">TEXT 2</div><svg width="238" height="157"><rect width="238" height="157" fill="url(#ptx2)"/></svg></div>
<div class="clip" style="left:1232px;top:1092px;width:237px;height:157px"><div class="lab">TEXT 2</div><svg width="237" height="157"><rect width="237" height="157" fill="url(#ptx2)"/></svg></div>
<div class="clip" style="left:1469px;top:1092px;width:238px;height:157px"><div class="lab">TEXT 2</div><svg width="238" height="157"><rect width="238" height="157" fill="url(#ptx2)"/></svg></div>
<div class="clip" style="left:2183px;top:1092px;width:237px;height:157px"><div class="lab">TEXT 2</div><svg width="237" height="157"><rect width="237" height="157" fill="url(#ptx2)"/></svg></div>
<div class="clip" style="left:2420px;top:1092px;width:238px;height:157px"><div class="lab">TEXT 2</div><svg width="238" height="157"><rect width="238" height="157" fill="url(#ptx2)"/></svg></div>
<div class="clip" style="left:2658px;top:1092px;width:162px;height:157px"><div class="lab">TEXT 2</div><svg width="162" height="157"><rect width="162" height="157" fill="url(#ptx2)"/></svg></div>

<!-- track 9 PLUCK -->
<div class="clip" style="left:1232px;top:1252px;width:237px;height:157px"><div class="lab">PLUCK VERSE</div><svg width="237" height="157"><rect width="237" height="157" fill="url(#ppl)"/></svg></div>
<div class="clip" style="left:1469px;top:1252px;width:97px;height:157px"><div class="lab">PLUCK VERSE</div><svg width="97" height="157"><rect width="97" height="157" fill="url(#ppl)"/></svg></div>
<div class="clip" style="left:1590px;top:1252px;width:96px;height:157px"><div class="lab">PLUCK VERSE</div><svg width="96" height="157"><rect width="96" height="157" fill="url(#ppl)"/></svg></div>

<!-- track 10 Phase Plant -->
<div class="clip" style="left:1232px;top:1412px;width:237px;height:130px;background:#6e8f6a;border-color:#5a7a56"><div class="lab" style="background:#9a9c9e">Phase Plant</div>
<div class="a" style="left:60px;top:0;width:2px;height:130px;background:#7fa07a"></div><div class="a" style="left:120px;top:0;width:2px;height:130px;background:#7fa07a"></div><div class="a" style="left:180px;top:0;width:2px;height:130px;background:#7fa07a"></div></div>

<!-- playhead -->
<div class="a" style="left:548px;top:6px;width:2px;height:1536px;background:#c8c8c8"></div>

<!-- right column -->
<div class="a" style="left:2820px;top:6px;width:32px;height:1536px;background:#2b2c2f"></div>
<div class="a" style="left:2827px;top:137px;width:0;height:0;border-left:9px solid transparent;border-right:9px solid transparent;border-bottom:11px solid #8a8a8a"></div>
<div class="a" style="left:2834px;top:165px;width:4px;height:1355px;background:#55575b;border-radius:2px"></div>
<div class="a" style="left:2827px;top:1520px;width:0;height:0;border-left:9px solid transparent;border-right:9px solid transparent;border-top:11px solid #8a8a8a"></div>

<!-- bottom bar -->
<div class="a" style="left:8px;top:1542px;width:2844px;height:34px;background:#29292c"></div>
<div class="a" style="left:8px;top:1542px;width:509px;height:34px;background:#2b2c2f"></div>
<div class="a" style="left:46px;top:1547px;color:#e0e0e0;font-size:22px">M</div>
<div class="a" style="left:146px;top:1547px;color:#e0e0e0;font-size:22px">S</div>
<svg class="a" style="left:238px;top:1549px" width="24" height="24"><path d="M7 5 A9 9 0 1 0 17 5" fill="none" stroke="#4a9ee8" stroke-width="3"/><rect x="10.5" y="1" width="3" height="11" fill="#4a9ee8"/></svg>
<div class="a" style="left:339px;top:1547px;color:#c8c8c8;font-size:22px">Normal</div>
<div class="a" style="left:446px;top:1557px;width:0;height:0;border-left:7px solid transparent;border-right:7px solid transparent;border-top:9px solid #8a8a8a"></div>
<svg class="a" style="left:487px;top:1550px" width="16" height="18"><g fill="#888"><rect width="16" height="4"/><rect y="7" width="16" height="4"/><rect y="14" width="16" height="4"/></g></svg>
<div class="a" style="left:530px;top:1552px;width:0;height:0;border-top:8px solid transparent;border-bottom:8px solid transparent;border-right:10px solid #8a8a8a"></div>
<div class="a" style="left:566px;top:1554px;width:86px;height:12px;background:#7a7a7c;border-radius:6px"></div>
<div class="a" style="left:2574px;top:1550px;width:0;height:0;border-top:9px solid transparent;border-bottom:9px solid transparent;border-left:12px solid #8a8a8a"></div>
<div class="a" style="left:2618px;top:1557px;width:170px;height:4px;background:#8a8a8a"></div>
<div class="a" style="left:2613px;top:1553px;width:10px;height:10px;border-radius:50%;background:#8a8a8a"></div>
<div class="a" style="left:2663px;top:1550px;width:9px;height:20px;border-radius:3px;background:#8a8a8a"></div>
<div class="a" style="left:2782px;top:1552px;width:16px;height:16px;border-radius:50%;background:#8a8a8a"></div>
<div class="a" style="left:2832px;top:1546px;width:14px;height:6px;background:#f2d54a"></div>
<div class="a" style="left:2832px;top:1555px;width:14px;height:6px;background:#f2d54a"></div>
<div class="a" style="left:2820px;top:1562px;width:8px;height:4px;background:#f2d54a"></div>
<div class="a" style="left:2820px;top:1569px;width:8px;height:4px;background:#f2d54a"></div>
</body></html>
